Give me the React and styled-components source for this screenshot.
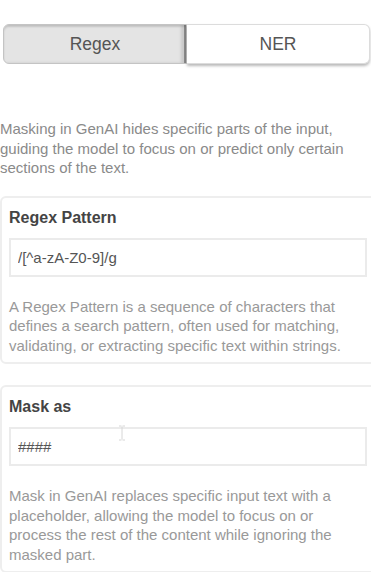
import styled, { createGlobalStyle } from 'styled-components';

const Global = createGlobalStyle`
  html, body {
    margin: 0;
    padding: 0;
    background: #fff;
    overflow-x: hidden;
  }
  body {
    font-family: "Liberation Sans", Arial, sans-serif;
  }
`;

const Page = styled.div`
  padding-top: 24px;
  width: 371px;
`;

const Tabs = styled.div`
  display: flex;
  margin: 0 1px 0 3px;
  height: 40px;
`;

const Tab = styled.button`
  flex: 1;
  font-family: inherit;
  font-size: 17.5px;
  color: #555;
  cursor: pointer;
  padding: 0;
  background: ${p => (p.$active ? '#e4e4e4' : '#fff')};
  border: 1px solid ${p => (p.$active ? '#c4c4c4' : '#dcdcdc')};
  border-radius: ${p => (p.$left ? '6px 0 0 6px' : '0 6px 6px 0')};
  box-shadow: ${p =>
    p.$active
      ? 'inset 0 2px 2px rgba(0,0,0,0.12), inset -2px 0 0 #8a8a8a, inset -5px 0 3px rgba(0,0,0,0.12)'
      : '0 2px 3px rgba(0,0,0,0.28)'};
  ${p => !p.$active && 'border-left: none;'}
`;

const Intro = styled.p`
  margin: 55px 0 0 0;
  font-size: 15px;
  line-height: 19.5px;
  color: #8a8a8a;
`;

const Card = styled.section`
  position: relative;
  margin-top: ${p => p.$gap}px;
  width: 380px;
  box-sizing: border-box;
  border: 2px solid #eeeeee;
  border-radius: 6px;
  padding: 10px 9px 7px 7px;
`;

const Title = styled.h3`
  margin: 0;
  font-size: 16px;
  line-height: 20px;
  font-weight: bold;
  color: #444;
`;

const Field = styled.input`
  display: block;
  box-sizing: border-box;
  width: 358px;
  height: 39px;
  margin-top: 10px;
  padding: 0 7px;
  border: 2px solid #ebebeb;
  border-radius: 0;
  font-family: inherit;
  font-size: 15px;
  color: #555;
  outline: none;
  background: #fff;
`;

const Help = styled.p`
  margin: 20px 0 0 0;
  width: 358px;
  font-size: 15px;
  line-height: 19.5px;
  color: #999;
`;

const Cursor = styled.svg`
  position: absolute;
  left: 116px;
  top: 38px;
  pointer-events: none;
`;

export default function App() {
  return (
    <Page>
      <Global />
      <Tabs>
        <Tab $active $left>Regex</Tab>
        <Tab>NER</Tab>
      </Tabs>
      <Intro>
        Masking in GenAI hides specific parts of the input, guiding the model to
        focus on or predict only certain sections of the text.
      </Intro>
      <Card $gap={18}>
        <Title>Regex Pattern</Title>
        <Field defaultValue="/[^a-zA-Z0-9]/g" />
        <Help>
          A Regex Pattern is a sequence of characters that defines a search
          pattern, often used for matching, validating, or extracting specific
          text within strings.
        </Help>
      </Card>
      <Card $gap={21}>
        <Title>Mask as</Title>
        <Field defaultValue="####" />
        <Help>
          Mask in GenAI replaces specific input text with a placeholder, allowing
          the model to focus on or process the rest of the content while ignoring
          the masked part.
        </Help>
        <Cursor width="8" height="16" viewBox="0 0 8 16">
          <path d="M1 1h2.5M4.5 1H7M4 1.5v13M1 15h2.5M4.5 15H7" stroke="#d6d6d6" strokeWidth="1" fill="none" />
        </Cursor>
      </Card>
    </Page>
  );
}
